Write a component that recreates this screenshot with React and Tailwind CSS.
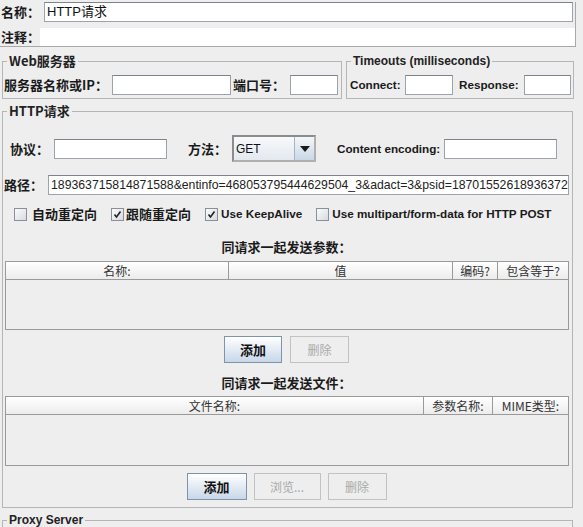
import React from 'react'

const cjk = "font-['Noto_Sans_CJK_SC',sans-serif]"
const latin = "font-['Liberation_Sans','Noto_Sans_CJK_SC',sans-serif]"

function Label({ children, className = '' }) {
  return (
    <span className={`${cjk} text-[13px] font-bold leading-[16px] text-[#1a1a1a] whitespace-nowrap ${className}`}>
      {children}
    </span>
  )
}

function EnLabel({ children, className = '' }) {
  return (
    <span className={`${latin} text-[11.7px] font-bold leading-[16px] text-[#1a1a1a] whitespace-nowrap ${className}`}>
      {children}
    </span>
  )
}

function Input({ className = '', children }) {
  return (
    <div className={`h-[20px] bg-white border border-[#9da3aa] border-t-[#7d838a] flex items-center overflow-hidden ${className}`}>
      {children}
    </div>
  )
}

function Checkbox({ checked }) {
  return (
    <span className="w-[13px] h-[13px] border border-[#8a9099] bg-gradient-to-br from-[#fbfbfb] to-[#d6dbe1] flex items-center justify-center shrink-0">
      {checked && (
        <svg width="9" height="9" viewBox="0 0 9 9">
          <path d="M1.5 4.5 L3.5 7 L7.5 1.5" stroke="#222" strokeWidth="1.6" fill="none" />
        </svg>
      )}
    </span>
  )
}

function Button({ children, enabled, className = '' }) {
  return enabled ? (
    <div className={`h-[27px] border border-[#7f93aa] bg-gradient-to-b from-[#ffffff] to-[#c8d7e8] flex items-center justify-center ${cjk} text-[13px] font-bold text-[#111] ${className}`}>
      {children}
    </div>
  ) : (
    <div className={`h-[27px] border border-[#c2c2c2] bg-[#eeeeee] flex items-center justify-center ${cjk} text-[12px] text-[#a9a9a9] ${className}`}>
      {children}
    </div>
  )
}

function Legend({ children, en }) {
  return (
    <legend className={`ml-[4px] px-[2px] ${en ? latin : cjk} ${en ? 'text-[12px]' : 'text-[13px]'} font-bold leading-[14px] text-[#222]`}>
      {children}
    </legend>
  )
}

function Table({ cols, height }) {
  return (
    <div className="ml-[2px] w-[564px] border border-[#9a9a9a] bg-[#eeeeee]" style={{ height }}>
      <div className="flex h-[18px] border-b border-[#9a9a9a] bg-gradient-to-b from-[#ffffff] to-[#ececec]">
        {cols.map((c, i) => (
          <div
            key={i}
            className={`flex items-center justify-center ${cjk} text-[12px] leading-[16px] text-[#333] ${i < cols.length - 1 ? 'border-r border-[#9a9a9a]' : ''}`}
            style={{ width: c.w }}
          >
            {c.t}
          </div>
        ))}
      </div>
    </div>
  )
}

export default function App() {
  return (
    <div className="w-[583px] h-[527px] bg-[#eeeeee] overflow-hidden pt-[2px]">
      {/* Name / comment */}
      <div className="w-[576px] border-r border-b border-[#a8a8a8]">
        <div className="flex items-center h-[20px]">
          <Label className="w-[44px] pl-[1px]">名称：</Label>
          <Input className="w-[529px]">
            <span className={`${latin} text-[13px] text-[#111] pl-[2px]`}>HTTP请求</span>
          </Input>
        </div>
        <div className="flex items-center h-[18px] mt-[6px]">
          <Label className="w-[40px] pl-[1px]">注释：</Label>
          <div className="flex-1 h-full bg-white" />
        </div>
      </div>

      {/* Server + timeouts */}
      <div className="flex mt-[7px] ml-[2px] gap-[4px]">
        <fieldset className="w-[340px] border border-[#b5b5b5]">
          <Legend>Web服务器</Legend>
          <div className="flex items-center h-[20px] mt-[7px] mb-[3px] pl-[1px]">
            <Label className="w-[108px]">服务器名称或IP：</Label>
            <Input className="w-[119px]" />
            <Label className="ml-[2px] w-[57px]">端口号：</Label>
            <Input className="w-[48px]" />
          </div>
        </fieldset>
        <fieldset className="w-[228px] border border-[#b5b5b5]">
          <Legend en>Timeouts (milliseconds)</Legend>
          <div className="flex items-center h-[20px] mt-[7px] mb-[3px] pl-[3px]">
            <EnLabel className="w-[55px]">Connect:</EnLabel>
            <Input className="w-[48px]" />
            <EnLabel className="ml-[6px] w-[65px]">Response:</EnLabel>
            <Input className="w-[47px]" />
          </div>
        </fieldset>
      </div>

      {/* HTTP request */}
      <fieldset className="mt-[5px] ml-[2px] w-[571px] border border-[#b5b5b5]">
        <Legend>HTTP请求</Legend>

        <div className="flex items-center h-[27px] mt-[17px] pl-[7px]">
          <Label className="w-[44px]">协议：</Label>
          <Input className="w-[113px]" />
          <Label className="ml-[21px] w-[44px]">方法：</Label>
          <div className="w-[84px] h-[27px] border-2 border-[#8c8c8c] border-r-[#b0b0b0] border-b-[#b0b0b0] flex">
            <div className="flex-1 bg-gradient-to-b from-[#f7f9fb] to-[#e3e9ef] flex items-center">
              <span className={`${latin} text-[12px] text-[#111] pl-[2px]`}>GET</span>
            </div>
            <div className="w-[20px] border-l border-[#a9b4c0] bg-gradient-to-b from-[#f4f7fa] to-[#c9d7e6] flex items-center justify-center">
              <svg width="10" height="6" viewBox="0 0 10 6">
                <path d="M0 0 L10 0 L5 6 Z" fill="#1a1a1a" />
              </svg>
            </div>
          </div>
          <EnLabel className="ml-[21px] w-[107px]">Content encoding:</EnLabel>
          <Input className="w-[113px]" />
        </div>

        <div className="flex items-center h-[20px] mt-[13px] pl-[1px]">
          <Label className="w-[44px]">路径：</Label>
          <Input className="w-[521px]">
            <span className={`${latin} text-[12.25px] text-[#222] pl-[2px] whitespace-nowrap`}>
              189363715814871588&amp;entinfo=468053795444629504_3&amp;adact=3&amp;psid=187015526189363728
            </span>
          </Input>
        </div>

        <div className="flex items-center h-[20px] mt-[9px] pl-[11px]">
          <Checkbox />
          <Label className="ml-[5px]">自动重定向</Label>
          <span className="ml-[14px]"><Checkbox checked /></span>
          <Label className="ml-[2px]">跟随重定向</Label>
          <span className="ml-[14px]"><Checkbox checked /></span>
          <EnLabel className="ml-[3px]">Use KeepAlive</EnLabel>
          <span className="ml-[14px]"><Checkbox /></span>
          <EnLabel className="ml-[3px]">Use multipart/form-data for HTTP POST</EnLabel>
        </div>

        <div className="flex justify-center h-[16px] mt-[15px] pr-[2px]">
          <Label>同请求一起发送参数：</Label>
        </div>

        <div className="mt-[6px]">
          <Table
            height={69}
            cols={[
              { t: '名称:', w: 223 },
              { t: '值', w: 224 },
              { t: '编码?', w: 45 },
              { t: '包含等于?', w: 70 },
            ]}
          />
        </div>

        <div className="flex justify-center gap-[8px] mt-[6px] pr-[2px]">
          <Button enabled className="w-[58px]">添加</Button>
          <Button className="w-[59px]">删除</Button>
        </div>

        <div className="flex justify-center h-[16px] mt-[12px] pr-[2px]">
          <Label>同请求一起发送文件：</Label>
        </div>

        <div className="mt-[5px]">
          <Table
            height={70}
            cols={[
              { t: '文件名称:', w: 418 },
              { t: '参数名称:', w: 69 },
              { t: 'MIME类型:', w: 75 },
            ]}
          />
        </div>

        <div className="flex justify-center gap-[7px] mt-[7px] mb-[7px] pr-[2px]">
          <Button enabled className="w-[60px]">添加</Button>
          <Button className="w-[67px]">浏览...</Button>
          <Button className="w-[59px]">删除</Button>
        </div>
      </fieldset>

      {/* Proxy */}
      <fieldset className="mt-[5px] ml-[2px] w-[571px] h-[40px] border border-[#b5b5b5]">
        <Legend en>Proxy Server</Legend>
      </fieldset>
    </div>
  )
}
